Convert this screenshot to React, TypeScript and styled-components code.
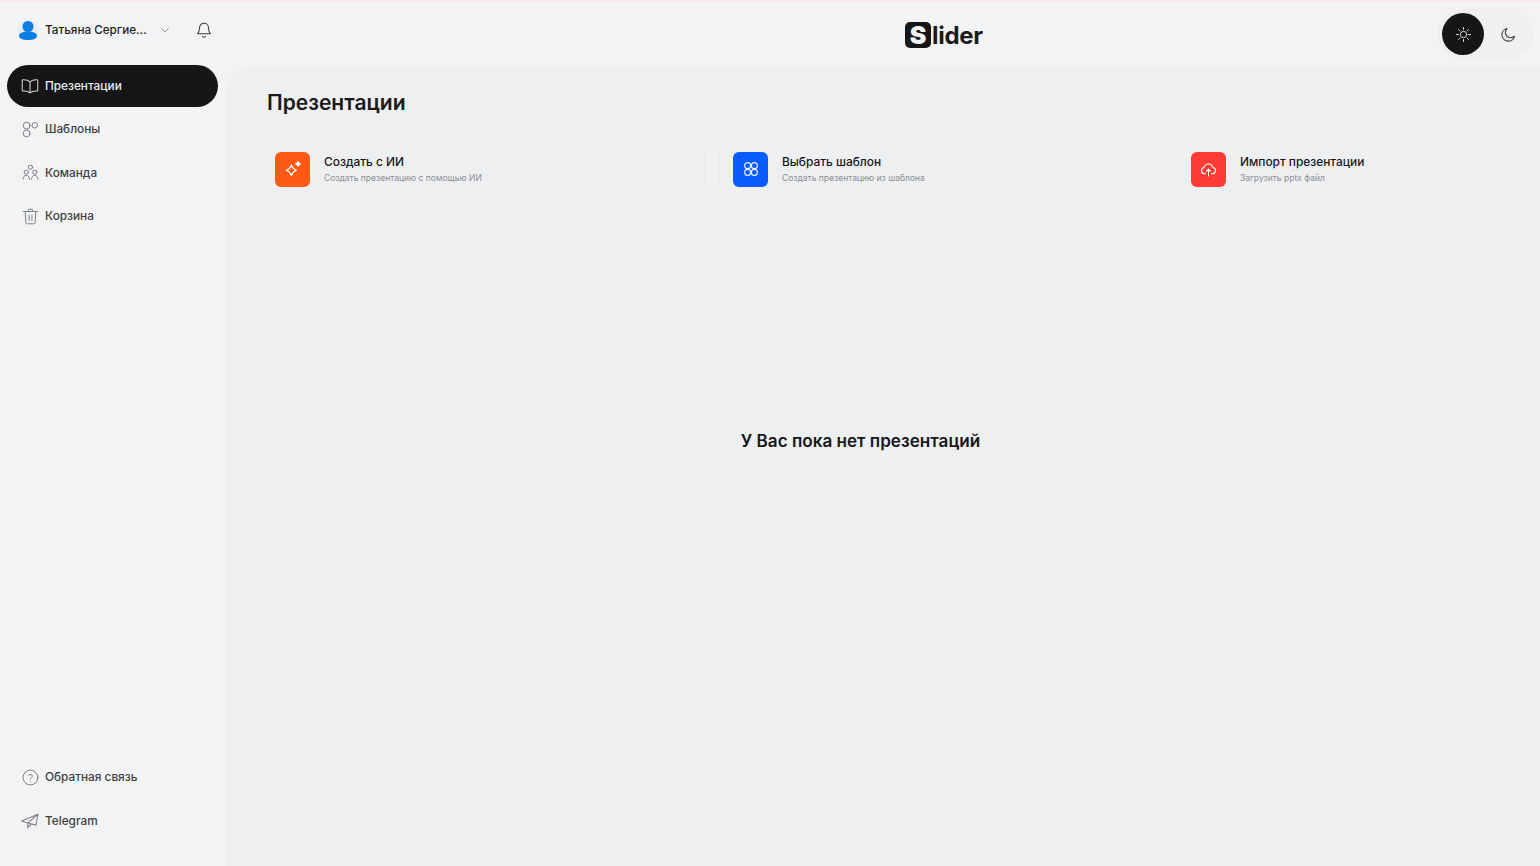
import React from 'react';
import styled, { createGlobalStyle } from 'styled-components';

const GlobalStyle = createGlobalStyle`
  html, body { margin: 0; padding: 0; height: 100%; }
  body {
    background: #f2f3f5;
    font-family: Inter, "Noto Sans", sans-serif;
    color: #161616;
    overflow: hidden;
  }
  * { box-sizing: border-box; }
`;

const Stroke: React.FC<{ size?: number; color?: string; width?: number; children: React.ReactNode }> = ({
  size = 17,
  color = '#7b7e82',
  width = 1.4,
  children,
}) => (
  <svg width={size} height={size} viewBox="0 0 24 24" fill="none" stroke={color} strokeWidth={width} strokeLinecap="round" strokeLinejoin="round">
    {children}
  </svg>
);

const BookIcon = ({ color }: { color: string }) => (
  <Stroke color={color} size={18}>
    <path d="M12 6.500C10 4.500 7 3.500 2.500 3.700a1 1 0 0 0-.9 1v13.100a1 1 0 0 0 1 1c4-.2 7 .3 9.400 2.200 2.400-1.900 5.400-2.400 9.400-2.200a1 1 0 0 0 1-1V4.700a1 1 0 0 0-.9-1C17 3.500 14 4.500 12 6.500Z" />
    <path d="M12 6.500V21" />
  </Stroke>
);

const TemplatesIcon = () => (
  <Stroke>
    <circle cx="6.500" cy="6.500" r="4.800" />
    <circle cx="18" cy="6" r="4" />
    <circle cx="6.500" cy="17.500" r="4.800" />
  </Stroke>
);

const TeamIcon = () => (
  <Stroke>
    <circle cx="12" cy="4.500" r="3" />
    <circle cx="6" cy="11.500" r="3" />
    <circle cx="18" cy="11.500" r="3" />
    <path d="M1.500 21.500c0-3.500 2-5.500 4.500-5.500s4.500 2 4.500 5.500" />
    <path d="M13.500 21.500c0-3.500 2-5.500 4.500-5.500s4.500 2 4.500 5.500" />
  </Stroke>
);

const TrashIcon = () => (
  <Stroke>
    <path d="M2 5h20" />
    <path d="M8.500 5 9.500 1.800h5L15.500 5" />
    <path d="M4.500 5 5.500 20.500a2 2 0 0 0 2 1.800h9a2 2 0 0 0 2-1.800L19.500 5" />
    <path d="M10 10v7.500M14 10v7.500" />
  </Stroke>
);

const HelpIcon = () => (
  <Stroke>
    <circle cx="12" cy="12" r="10.500" />
    <path d="M9.300 9.300a2.800 2.800 0 0 1 5.400.900c0 1.800-2.700 2.300-2.700 4" />
    <path d="M12 17.300v.2" />
  </Stroke>
);

const SendIcon = () => (
  <Stroke size={20}>
    <path d="M22.500 3 1 12l8 2.800L20 17.500 22.500 3Z" />
    <path d="M22.500 3 9 14.800v6l4.500-4.700" />
  </Stroke>
);

const UserIcon = () => (
  <svg width="20" height="20" viewBox="0 0 20 20">
    <circle cx="10" cy="10" r="10" fill="#e9edf2" />
    <circle cx="10" cy="6.500" r="5.500" fill="#0a7fe0" />
    <path d="M1 16c0-2.800 3.500-4.500 9-4.500s9 1.700 9 4.500c0 2.500-4 4-9 4s-9-1.500-9-4Z" fill="#0a7fe0" />
  </svg>
);

const Page = styled.div`
  display: flex;
  flex-direction: column;
  width: 1540px;
  height: 866px;
  border-top: 2px solid #f9e6ea;
  overflow: hidden;
`;

const Header = styled.header`
  display: grid;
  grid-template-columns: 886px auto 1fr;
  align-items: center;
  height: 63px;
  flex-shrink: 0;
  padding: 0 7px 0 18px;
`;

const UserBlock = styled.div`
  display: flex;
  align-items: center;
  margin-bottom: 7px;
`;

const UserName = styled.span`
  width: 103px;
  margin-left: 7px;
  font-size: 11.700px;
  font-weight: 450;
  white-space: nowrap;
  color: #1d1d1f;
`;

const Chevron = styled.span`
  display: flex;
  margin-left: 11px;
`;

const Bell = styled.span`
  display: flex;
  margin-left: 24px;
`;

const Logo = styled.div`
  display: flex;
  align-items: center;
  margin-top: 3px;
  margin-left: 1px;
`;

const LogoMark = styled.span`
  display: flex;
  align-items: center;
  justify-content: center;
  width: 26px;
  height: 26px;
  border-radius: 5px;
  background: #161616;
  color: #f2f3f5;
  font-size: 25px;
  font-weight: 900;
  line-height: 26px;
`;

const LogoText = styled.span`
  margin-left: 1px;
  font-size: 24px;
  font-weight: 700;
  letter-spacing: -0.3px;
  color: #1b1b1b;
`;

const ThemeSwitch = styled.div`
  justify-self: end;
  display: flex;
  align-items: center;
  gap: 3px;
  width: 95px;
  height: 50px;
  margin-top: 1px;
  padding: 0 3px;
  border: 1px solid #ecedef;
  border-radius: 25px;
  background: #eff0f2;
`;

const ThemeButton = styled.span<{ $active?: boolean }>`
  display: flex;
  align-items: center;
  justify-content: center;
  width: 42px;
  height: 42px;
  border-radius: 50%;
  background: ${(p) => (p.$active ? '#161616' : 'transparent')};
`;

const Body = styled.div`
  display: flex;
  flex: 1;
  min-height: 0;
`;

const Sidebar = styled.aside`
  display: flex;
  flex-direction: column;
  justify-content: space-between;
  width: 226px;
  flex-shrink: 0;
  padding: 0 7px 24px;
`;

const NavGroup = styled.nav`
  display: flex;
  flex-direction: column;
  gap: 1.500px;
`;

const NavItem = styled.a<{ $active?: boolean }>`
  display: flex;
  align-items: center;
  gap: 6px;
  width: 211px;
  height: 42px;
  padding: 0 0 1px 14px;
  border-radius: 21px;
  font-size: 11.800px;
  font-weight: 450;
  color: ${(p) => (p.$active ? '#eceef0' : '#3d3f43')};
  background: ${(p) => (p.$active ? '#161616' : 'transparent')};
`;

const NavIcon = styled.span`
  display: flex;
  justify-content: center;
  width: 18px;
`;

const Main = styled.main`
  flex: 1;
  min-width: 0;
  margin-top: 2px;
  padding: 22px 0 0 35px;
  background: #eeeff1;
  border-top-left-radius: 24px;
  display: flex;
  flex-direction: column;
  overflow: hidden;
`;

const Title = styled.h1`
  margin: 0 0 20px 6px;
  font-size: 21px;
  line-height: 28px;
  font-weight: 600;
  color: #1a1a1a;
`;

const CardRow = styled.div`
  display: flex;
  gap: 14px;
`;

const Card = styled.div`
  display: flex;
  align-items: center;
  gap: 14px;
  width: 444px;
  height: 64px;
  flex-shrink: 0;
  padding-left: 13px;
  border: 1px solid #e9eaec;
  border-radius: 16px;
`;

const CardIcon = styled.span<{ $color: string }>`
  display: flex;
  align-items: center;
  justify-content: center;
  width: 35px;
  height: 35px;
  border-radius: 6px;
  background: ${(p) => p.$color};
`;

const CardText = styled.div`
  display: flex;
  flex-direction: column;
  gap: 2px;
`;

const CardTitle = styled.span`
  font-size: 11.900px;
  line-height: 16px;
  font-weight: 500;
  color: #17171a;
`;

const CardSub = styled.span`
  font-size: 8.500px;
  line-height: 13px;
  color: #8c8e92;
`;

const Empty = styled.div`
  flex: 1;
  display: flex;
  justify-content: center;
  align-items: flex-start;
  padding: 228px 80px 0 0;
  font-size: 17.100px;
  line-height: 24px;
  font-weight: 600;
  color: #18181a;
`;

const App: React.FC = () => (
  <Page>
    <GlobalStyle />
    <Header>
      <UserBlock>
        <UserIcon />
        <UserName>Татьяна Сергие...</UserName>
        <Chevron>
          <Stroke size={12} color="#6f7175"><path d="m5 9 7 7 7-7" /></Stroke>
        </Chevron>
        <Bell>
          <Stroke size={18} color="#3a3b3e">
            <path d="M6 9a6 6 0 0 1 12 0c0 6 2.500 7.500 2.500 8H3.500c0-.5 2.500-2 2.500-8Z" />
            <path d="M10 20.500a2.200 2.200 0 0 0 4 0" />
          </Stroke>
        </Bell>
      </UserBlock>
      <Logo>
        <LogoMark>S</LogoMark>
        <LogoText>lider</LogoText>
      </Logo>
      <ThemeSwitch>
        <ThemeButton $active>
          <Stroke size={17} color="#d8d8d8">
            <circle cx="12" cy="12" r="4.500" />
            <path d="M12 2v3M12 19v3M2 12h3M19 12h3M5 5l2 2M17 17l2 2M5 19l2-2M17 7l2-2" />
          </Stroke>
        </ThemeButton>
        <ThemeButton>
          <Stroke size={17} color="#3f4043" width={1.600}>
            <path d="M20.500 14.500A9 9 0 1 1 10 3.500a7 7 0 0 0 10.500 11Z" />
          </Stroke>
        </ThemeButton>
      </ThemeSwitch>
    </Header>
    <Body>
      <Sidebar>
        <NavGroup>
          <NavItem $active><NavIcon><BookIcon color="#d4d5d7" /></NavIcon>Презентации</NavItem>
          <NavItem><NavIcon><TemplatesIcon /></NavIcon>Шаблоны</NavItem>
          <NavItem><NavIcon><TeamIcon /></NavIcon>Команда</NavItem>
          <NavItem><NavIcon><TrashIcon /></NavIcon>Корзина</NavItem>
        </NavGroup>
        <NavGroup>
          <NavItem><NavIcon><HelpIcon /></NavIcon>Обратная связь</NavItem>
          <NavItem><NavIcon><SendIcon /></NavIcon>Telegram</NavItem>
        </NavGroup>
      </Sidebar>
      <Main>
        <Title>Презентации</Title>
        <CardRow>
          <Card>
            <CardIcon $color="#ff5a14">
              <Stroke size={20} color="#fff" width={1.500}>
                <path d="M10 7c1 3.500 2.800 5.200 6 6.500-3.200 1.300-5 3-6 6.500-1-3.500-2.800-5.200-6-6.500 3.200-1.300 5-3 6-6.500Z" />
                <path d="M18 3c.3 1.500 1 2.300 2.700 2.800-1.700.5-2.400 1.300-2.700 2.800-.3-1.500-1-2.300-2.700-2.800 1.700-.5 2.400-1.300 2.700-2.800Z" fill="#fff" />
              </Stroke>
            </CardIcon>
            <CardText>
              <CardTitle>Создать с ИИ</CardTitle>
              <CardSub>Создать презентацию с помощью ИИ</CardSub>
            </CardText>
          </Card>
          <Card>
            <CardIcon $color="#0a5cff">
              <Stroke size={18} color="#e8efff" width={1.500}>
                <circle cx="7.500" cy="7.500" r="4" />
                <circle cx="16.500" cy="7.500" r="4" />
                <circle cx="7.500" cy="16.500" r="4" />
                <circle cx="16.500" cy="16.500" r="4" />
              </Stroke>
            </CardIcon>
            <CardText>
              <CardTitle>Выбрать шаблон</CardTitle>
              <CardSub>Создать презентацию из шаблона</CardSub>
            </CardText>
          </Card>
          <Card>
            <CardIcon $color="#ff3b36">
              <Stroke size={17} color="#fff" width={1.500}>
                <path d="M8 18H6.500a4.500 4.500 0 0 1-.8-8.900 6.500 6.500 0 0 1 12.600 0A4.500 4.500 0 0 1 17.500 18H16" />
                <path d="M12 21v-9M9 14.500l3-3 3 3" />
              </Stroke>
            </CardIcon>
            <CardText>
              <CardTitle>Импорт презентации</CardTitle>
              <CardSub>Загрузить pptx файл</CardSub>
            </CardText>
          </Card>
        </CardRow>
        <Empty>У Вас пока нет презентаций</Empty>
      </Main>
    </Body>
  </Page>
);

export default App;
